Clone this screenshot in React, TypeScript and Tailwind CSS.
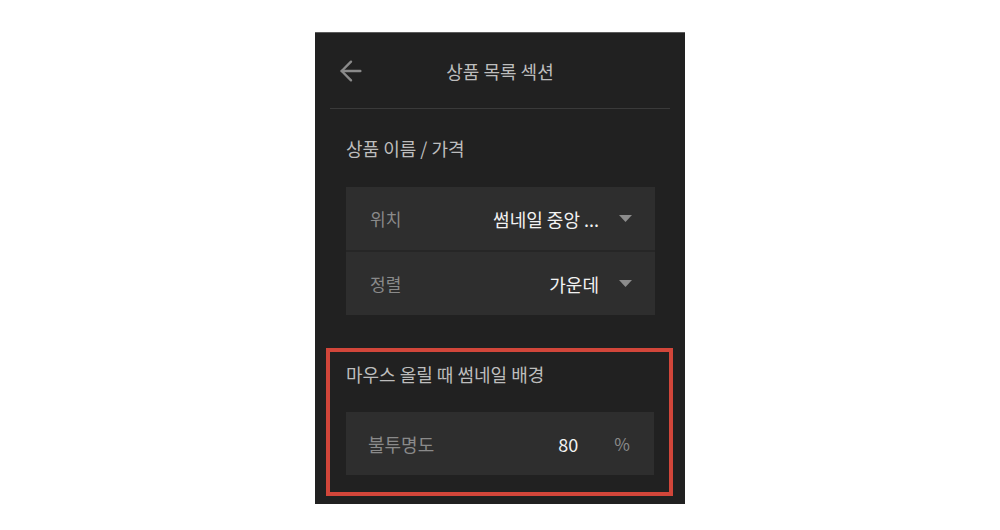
import { ArrowLeft } from 'lucide-react';

function Caret() {
  return (
    <svg width="13" height="7" viewBox="0 0 13 7" className="ml-[20px]">
      <path d="M0 0 L13 0 L6.5 7 Z" fill="#8c8c8c" />
    </svg>
  );
}

function SelectRow({ label, value }: { label: string; value: string }) {
  return (
    <div className="flex items-center h-[63px] pl-[24px] pr-[23px] bg-[#2e2e2e]">
      <span className="text-[17px] leading-6 text-[#8a8a8a]">{label}</span>
      <span className="ml-auto text-[18px] leading-6 text-[#f2f2f2]">{value}</span>
      <Caret />
    </div>
  );
}

export default function App() {
  return (
    <div
      className="w-full h-[530px] bg-white pt-[32px]"
      style={{ fontFamily: '"Noto Sans CJK KR", "Noto Sans", sans-serif' }}
    >
      <div className="mx-auto w-[370px] h-[472px] bg-[#212121] border-t border-[#5c5c5c]">
        <div className="relative flex items-center justify-center h-[75px]">
          <ArrowLeft size={32} strokeWidth={1.8} className="absolute left-[20px] text-[#8a8a8a]" />
          <span className="text-[18px] text-[#bdbdbd] leading-6">상품 목록 섹션</span>
        </div>
        <div className="mx-[15px] h-px bg-[#3a3a3a]" />

        <div className="pl-[31px] pr-[30px] pt-[27px]">
          <div className="text-[18px] leading-6 text-[#bdbdbd]">상품 이름 / 가격</div>
          <div className="mt-[27px] flex flex-col gap-[2px] bg-[#262626]">
            <SelectRow label="위치" value="썸네일 중앙 ..." />
            <SelectRow label="정렬" value="가운데" />
          </div>
        </div>

        <div className="ml-[11px] mt-[33px] w-[347px] border-4 border-[#d2463a] pl-[16px] pr-[15px] pt-[10px] pb-[17px]">
          <div className="text-[18px] leading-6 text-[#bdbdbd]">마우스 올릴 때 썸네일 배경</div>
          <div className="mt-[26px] flex items-center h-[63px] pl-[22px] pr-[24px] bg-[#2e2e2e]">
            <span className="text-[18px] leading-6 text-[#8a8a8a]">불투명도</span>
            <span className="ml-auto text-[18px] leading-6 text-[#f2f2f2]">80</span>
            <span className="ml-[36px] text-[17px] leading-6 text-[#8a8a8a]">%</span>
          </div>
        </div>
      </div>
    </div>
  );
}
